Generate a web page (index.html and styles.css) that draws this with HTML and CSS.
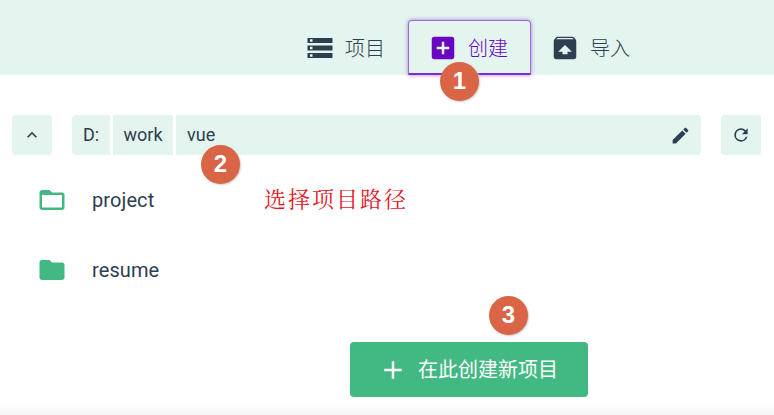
FILE: index.html
```html
<!DOCTYPE html>
<html lang="zh-CN">
<head>
<meta charset="utf-8">
<title>创建项目</title>
<link rel="stylesheet" href="styles.css">
</head>
<body>
<nav class="tabs">
  <a class="tab"><svg class="icon" viewBox="0 0 24 24"><path d="M2 20h20v-4H2v4zm2-3h2v2H4v-2zM2 4v4h20V4H2zm4 3H4V5h2v2zm-4 7h20v-4H2v4zm2-3h2v2H4v-2z"/></svg><span>项目</span></a>
  <a class="tab active"><svg class="icon" viewBox="0 0 24 24"><path d="M19 3H5c-1.110 0-2 .9-2 2v14c0 1.100.89 2 2 2h14c1.100 0 2-.9 2-2V5c0-1.100-.9-2-2-2zm-2 10h-4v4h-2v-4H7v-2h4V7h2v4h4v2z"/></svg><span>创建</span><b class="badge one">1</b></a>
  <a class="tab"><svg class="icon" viewBox="0 0 24 24"><path d="M20.550 5.220l-1.390-1.680C18.880 3.210 18.470 3 18 3H6c-.47 0-.88.21-1.150.550L3.460 5.220C3.170 5.570 3 6.010 3 6.500V19c0 1.100.89 2 2 2h14c1.100 0 2-.9 2-2V6.500c0-.49-.17-.93-.45-1.280zM12 9.500l5.500 5.500H14v2h-4v-2H6.500L12 9.500zM5.120 5l.82-1h12l.93 1H5.120z"/></svg><span>导入</span></a>
</nav>
<main>
  <div class="toolbar">
    <button class="tool"><svg class="small" viewBox="0 0 24 24"><path d="M7.410 15.410L12 10.830l4.590 4.580L18 14l-6-6-6 6z"/></svg></button>
    <div class="path">
      <span class="part drive">D:</span>
      <span class="part work">work</span>
      <span class="part current">vue<b class="badge two">2</b><svg class="edit" viewBox="0 0 24 24"><path d="M3 17.250V21h3.750L17.810 9.940l-3.750-3.750L3 17.250zM20.710 7.040a1 1 0 0 0 0-1.410l-2.340-2.340a1 1 0 0 0-1.410 0l-1.830 1.830 3.750 3.750 1.830-1.830z"/></svg></span>
    </div>
    <button class="tool"><svg class="small" viewBox="0 0 24 24"><path d="M17.650 6.350A7.958 7.958 0 0 0 12 4a8 8 0 1 0 7.730 10h-2.080A6 6 0 1 1 12 6c1.660 0 3.140.69 4.220 1.780L13 11h7V4l-2.350 2.350z"/></svg></button>
  </div>
  <div class="folders">
    <div class="folder"><svg class="icon" viewBox="0 0 24 24"><path d="M20 6h-8l-2-2H4c-1.100 0-1.990.9-1.990 2L2 18c0 1.100.9 2 2 2h16c1.100 0 2-.9 2-2V8c0-1.100-.9-2-2-2zm0 12H4V8h16v10z"/></svg><span class="name">project</span><span class="note">选择项目路径</span></div>
    <div class="folder"><svg class="icon" viewBox="0 0 24 24"><path d="M10 4H4c-1.100 0-1.990.9-1.990 2L2 18c0 1.100.9 2 2 2h16c1.100 0 2-.9 2-2V8c0-1.100-.9-2-2-2h-8l-2-2z"/></svg><span class="name">resume</span></div>
  </div>
</main>
<footer>
  <button class="create"><svg class="icon" viewBox="0 0 24 24"><path d="M19 13h-6v6h-2v-6H5v-2h6V5h2v6h6v2z"/></svg><span>在此创建新项目</span><b class="badge three">3</b></button>
</footer>
</body>
</html>
```
FILE: styles.css
```css
* { box-sizing: border-box; }
body {
  margin: 0;
  height: 415px;
  overflow: hidden;
  display: flex;
  flex-direction: column;
  background: linear-gradient(#fff 0 403px, #f6f6f6 415px);
  color: #2c3e50;
  font: 20px/1 Roboto, "Noto Sans CJK SC", sans-serif;
}
svg { display: block; fill: currentColor; flex: none; }
button { border: 0; font: inherit; color: inherit; }
.icon { width: 30px; height: 30px; }
.small { width: 20px; height: 20px; }
.tabs {
  height: 75px;
  padding: 20px 0 0 287px;
  display: flex;
  background: #e4f4ee;
  font-weight: 300;
}
.tab {
  position: relative;
  width: 121px;
  height: 55px;
  padding-left: 18px;
  display: flex;
  align-items: center;
  gap: 10px;
}
.tab span { line-height: 30px; padding-top: 2px; }
.tab.active {
  width: 123px;
  padding: 1px 0 0 19px;
  color: #6806c1;
  border: 1px solid #a16bd9;
  border-bottom: 2px solid #7d2ccd;
  border-radius: 4px 4px 1px 1px;
  box-shadow: 0 0 4px #a77bdc;
}
.tab.active + .tab { padding-left: 19px; }
.badge {
  position: absolute;
  z-index: 2;
  width: 39px;
  height: 39px;
  border-radius: 50%;
  background: #d96446;
  color: #fff;
  font: bold 24px/38px "Liberation Sans", sans-serif;
  text-align: center;
  box-shadow: 1px 1px 2px #ccc;
}
.one { left: 31px; top: 41px; }
.two { left: 25px; top: 30px; }
.three { left: 139px; top: -46px; }
.toolbar {
  padding: 40px 13px 0 12px;
  display: flex;
  gap: 20px;
}
.tool {
  width: 40px;
  height: 40px;
  padding: 0;
  border-radius: 4px;
  background: #e4f4ee;
  display: flex;
  align-items: center;
  justify-content: center;
}
.path { flex: 1; display: flex; gap: 3px; font-size: 18px; }
.part {
  position: relative;
  height: 40px;
  background: #e4f4ee;
  display: flex;
  align-items: center;
  justify-content: center;
}
.drive { width: 38px; border-radius: 4px 0 0 4px; }
.work { width: 60px; }
.current {
  flex: 1;
  justify-content: space-between;
  padding: 0 10px 0 11px;
  border-radius: 0 4px 4px 0;
}
.edit { width: 21px; height: 21px; }
.folders { padding: 10px 0 0 37px; }
.folder { height: 70px; display: flex; align-items: center; }
.folder .icon { color: #42b983; }
.name { width: 172px; margin-left: 25px; letter-spacing: 0.1px; }
.note {
  color: #e5151f;
  font: 400 22px/30px "Noto Serif CJK SC", "Noto Sans CJK SC", serif;
  letter-spacing: 2px;
  position: relative;
  top: -2px;
}
footer { padding: 37px 0 0 350px; }
.create {
  position: relative;
  width: 238px;
  height: 55px;
  padding: 0 0 0 28px;
  border-radius: 4px;
  background: #42b983;
  color: #fff;
  display: flex;
  align-items: center;
  gap: 10px;
  font-weight: 400;
}
```
